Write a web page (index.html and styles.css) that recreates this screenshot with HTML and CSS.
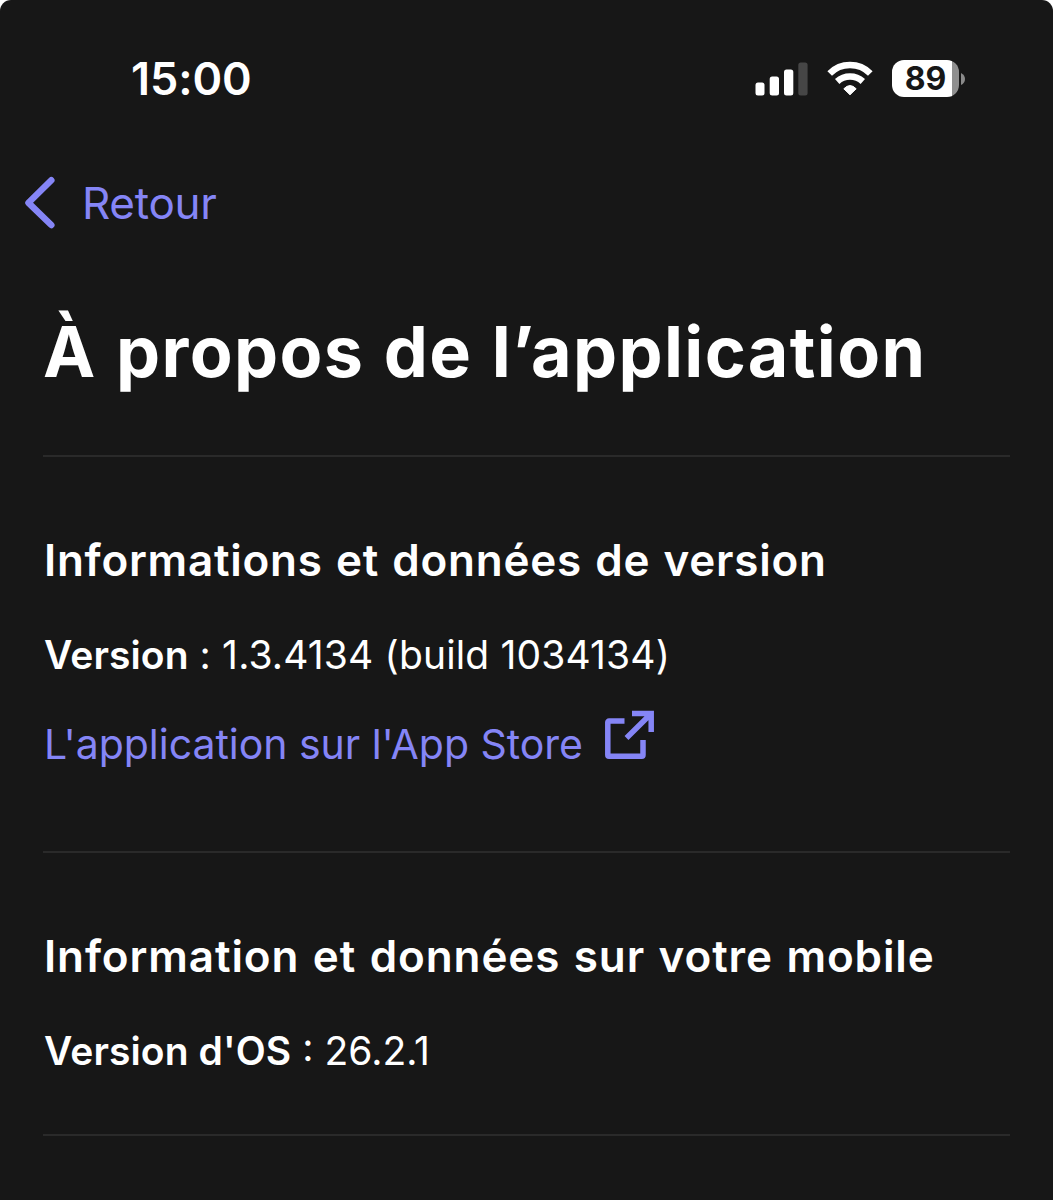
FILE: index.html
```html
<!DOCTYPE html>
<html lang="fr">
<head>
<meta charset="utf-8">
<title>À propos de l’application</title>
<link rel="stylesheet" href="styles.css">
</head>
<body>
<div class="screen">
  <header class="status">
    <span class="time">15:00</span>
    <div class="indicators">
      <svg class="signal" width="54" height="36" viewBox="0 0 54 36" fill="#fff">
        <rect x="0.5" y="21.5" width="9" height="13" rx="2.5"/>
        <rect x="14.7" y="15.5" width="9.3" height="19" rx="2.5"/>
        <rect x="29" y="8.5" width="9.3" height="26" rx="2.5"/>
        <rect x="43.3" y="1.5" width="9.3" height="33" rx="2.5" fill="#464646"/>
      </svg>
      <svg class="wifi" width="46" height="36" viewBox="0 0 46 36" fill="none" stroke="#fff">
        <path d="M2.700 12.500a28.700 28.700 0 0 1 40.600 0" stroke-width="6.500"/>
        <path d="M10.200 20.500a18.900 18.900 0 0 1 25.600 0" stroke-width="6.500"/>
        <path d="M16.800 27.800q6.200-6.500 12.400 0L23 33.800z" fill="#fff" stroke-width="1" stroke-linejoin="round"/>
      </svg>
      <div class="battery"><span class="level">89</span></div>
      <svg class="cap" width="4" height="12" viewBox="0 0 4 12"><path d="M0 0Q4 2 4 6T0 12z" fill="#8a8a8a"/></svg>
    </div>
  </header>
  <nav class="nav">
    <svg width="34" height="54" viewBox="0 0 34 54" fill="none" stroke="#8585f6" stroke-width="6.5" stroke-linecap="round" stroke-linejoin="round"><path d="M27.3 4.2 4.5 26.8 27.3 49"/></svg>
    <a class="back">Retour</a>
  </nav>
  <main class="main">
    <h1 class="title">À propos de l’application</h1>
    <section class="section section-version">
      <h2 class="heading">Informations et données de version</h2>
      <p class="row"><b class="label">Version</b><span class="value value-version">: 1.3.4134 (build 1034134)</span></p>
      <a class="store"><span class="store-text">L'application sur l'App Store</span><svg width="51" height="50" viewBox="0 0 51 50" fill="none" stroke="#8585f6" stroke-width="5.5"><path d="M20.500 11H5a1.200 1.200 0 0 0-1.200 1.200V45a1.200 1.200 0 0 0 1.200 1.200H37.800a1.200 1.200 0 0 0 1.200-1.200V30M28 3.500H47.200V22M47 3.700 22.500 28"/></svg></a>
    </section>
    <section class="section section-device">
      <h2 class="heading heading-device">Information et données sur votre mobile</h2>
      <p class="row"><b class="label">Version d'OS</b><span class="value">: 26.2.1</span></p>
    </section>
  </main>
</div>
</body>
</html>
```
FILE: styles.css
```css
* { box-sizing: border-box; }
body { margin: 0; background: #fff; }
h1, h2, p { margin: 0; }
.screen { height: 1200px; background: #171717; border-radius: 11px 11px 0 0; color: #fff; font-family: Inter, sans-serif; overflow: hidden; white-space: nowrap; }
.status { height: 157px; padding: 0 88px 0 131px; display: flex; align-items: center; justify-content: space-between; }
.time { font-size: 45px; font-weight: 600; letter-spacing: -0.1px; }
.indicators { display: flex; align-items: center; }
.wifi { margin-left: 18px; }
.battery { width: 67px; height: 37px; margin-left: 19px; border-radius: 12px; background: linear-gradient(90deg, #fff 60px, #8f8f8f 60px); }
.level { display: block; width: 67px; line-height: 37px; text-align: center; color: #171717; font-size: 32px; font-weight: 700; }
.cap { margin-left: 2px; }
.nav { height: 92px; padding-left: 24px; display: flex; align-items: center; }
.back { margin-left: 24px; color: #8585f6; font-size: 44px; letter-spacing: -0.3px; }
.main { padding: 53px 43px 0; }
.title { height: 153px; font-size: 70px; font-weight: 650; line-height: 100px; letter-spacing: 1.35px; word-spacing: 1.5px; }
.section { border-top: 2px solid #2a2a2a; padding: 53px 1px 0; }
.section-version { height: 396px; }
.section-device { height: 285px; border-bottom: 2px solid #2a2a2a; }
.heading { font-size: 44px; font-weight: 620; line-height: 100px; letter-spacing: 0.75px; word-spacing: 1.5px; }
.heading-device { letter-spacing: 0.9px; }
.row { height: 89px; display: flex; align-items: center; }
.label { font-size: 39px; font-weight: 620; line-height: 88px; letter-spacing: 0.1px; }
.value { margin-left: 11px; font-size: 39px; font-weight: 400; }
.value-version { letter-spacing: 0.15px; }
.store { height: 88px; display: flex; align-items: center; color: #8585f6; }
.store-text { padding-top: 1px; font-size: 41px; letter-spacing: -0.03px; }
.store svg { margin: -16px 0 0 21px; }
```
